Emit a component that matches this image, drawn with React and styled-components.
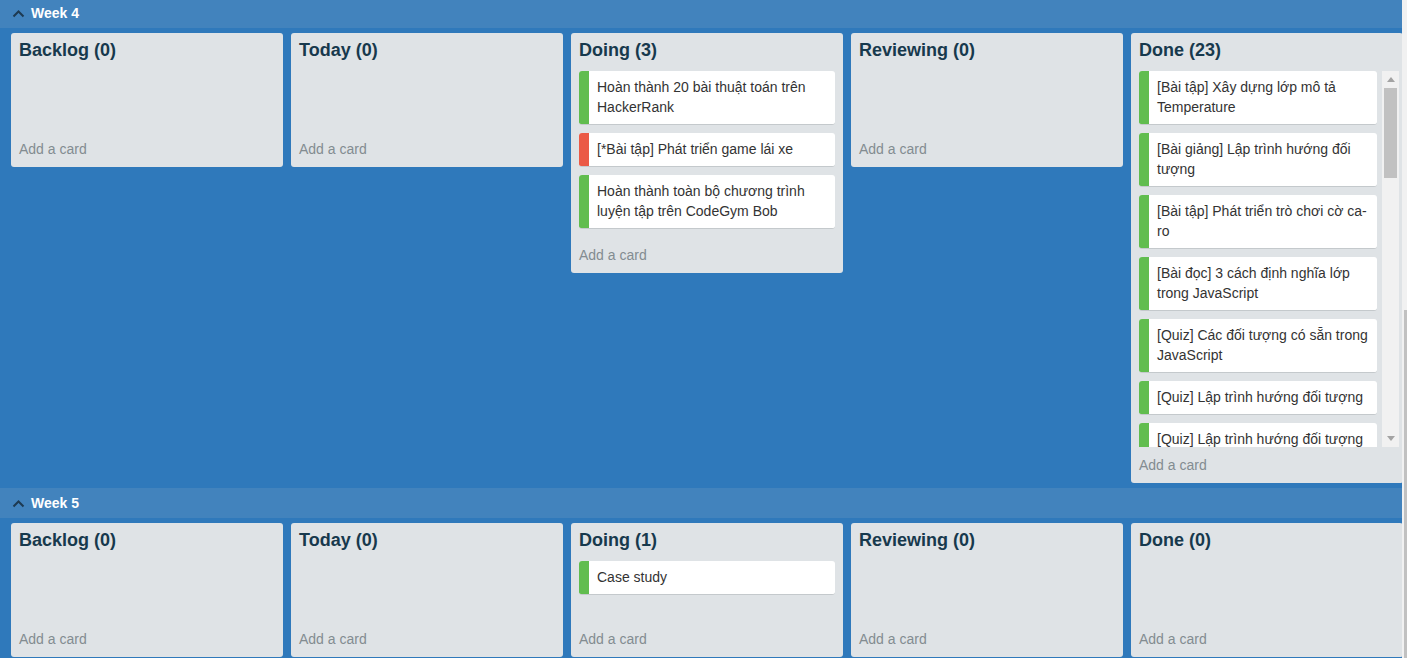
import React from "react";
import styled, { createGlobalStyle } from "styled-components";

const Global = createGlobalStyle`
  html, body { margin: 0; padding: 0; height: 100%; overflow: hidden; }
  body { font-family: "Liberation Sans", Arial, Helvetica, sans-serif; background: #2f79bb; }
  * { box-sizing: border-box; }
`;

const Page = styled.div`
  display: flex;
  width: 100vw;
  height: 100vh;
  overflow: hidden;
  background: #2f79bb;
`;

const Board = styled.div`
  flex: 1;
  min-width: 0;
  overflow: hidden;
  margin-top: -2px;
`;

const PageScroll = styled.div`
  width: 5px;
  flex: none;
  background: #f1f1f1;
  display: flex;
  flex-direction: column;
  align-items: flex-end;
`;

const PageThumb = styled.div`
  width: 3px;
  margin-top: 310px;
  flex: 1;
  background: #c1c1c1;
`;

const Section = styled.section`
  display: flex;
  flex-direction: column;
`;

const WeekHeader = styled.div`
  height: 30px;
  background: #4283bd;
  display: flex;
  align-items: center;
  padding-left: 12px;
  gap: 6px;
  color: #fff;
  font-weight: bold;
  font-size: 14px;
`;

const Lists = styled.div`
  display: flex;
  align-items: flex-start;
  gap: 8px;
  padding: 5px 0 5px 11px;
  overflow: hidden;
`;

const List = styled.div`
  flex: none;
  width: 272px;
  background: #dfe3e6;
  border-radius: 3px;
  display: flex;
  flex-direction: column;
`;

const ListTitle = styled.h2`
  margin: 0;
  padding: 6px 8px 10px;
  height: 38px;
  font-size: 18px;
  line-height: 22px;
  font-weight: bold;
  color: #17394d;
`;

const Cards = styled.div`
  min-height: 60px;
  padding: 0 8px 8px;
  display: flex;
  flex-direction: column;
  gap: 8px;
`;

const ScrollArea = styled.div`
  height: 376px;
  display: flex;
  padding-left: 8px;
  gap: 5px;
`;

const ScrollCards = styled.div`
  width: 238px;
  overflow: hidden;
  display: flex;
  flex-direction: column;
  gap: 8px;
`;

const InnerScrollbar = styled.div`
  width: 17px;
  background: #f1f1f1;
  display: flex;
  flex-direction: column;
  align-items: center;
`;

const ArrowBtn = styled.div`
  height: 17px;
  width: 17px;
  flex: none;
  display: flex;
  align-items: center;
  justify-content: center;
`;

const Thumb = styled.div`
  width: 13px;
  height: 90px;
  background: #c1c1c1;
`;

const Spacer = styled.div`
  flex: 1;
`;

const Card = styled.div`
  flex: none;
  display: flex;
  background: #fff;
  border-radius: 3px;
  border-bottom: 1px solid #c4c9cc;
  overflow: hidden;
`;

const Stripe = styled.div`
  width: 10px;
  flex: none;
  background: ${(p) => (p.$color === "red" ? "#eb5a46" : "#61bd4f")};
`;

const CardText = styled.div`
  padding: 6px 8px 7px;
  font-size: 14px;
  line-height: 20px;
  color: #333;
  min-width: 0;
`;

const AddCard = styled.div`
  padding: 8px;
  height: 36px;
  font-size: 14px;
  line-height: 20px;
  color: #838c91;
`;

const Chevron = () => (
  <svg width="13" height="9" viewBox="0 0 13 9">
    <path d="M1.5 7.5 L6.5 2.5 L11.5 7.5" fill="none" stroke="#1d3a52" strokeWidth="2" />
  </svg>
);

const Tri = ({ up }) => (
  <svg width="8" height="5" viewBox="0 0 8 5">
    <path d={up ? "M0 5 L4 0 L8 5 Z" : "M0 0 L4 5 L8 0 Z"} fill="#a3a3a3" />
  </svg>
);

const CardItem = ({ text, color }) => (
  <Card>
    <Stripe $color={color} />
    <CardText>{text}</CardText>
  </Card>
);

const doneCards = [
  "[Bài tập] Xây dựng lớp mô tả Temperature",
  "[Bài giảng] Lập trình hướng đối tượng",
  "[Bài tập] Phát triển trò chơi cờ ca-ro",
  "[Bài đọc] 3 cách định nghĩa lớp trong JavaScript",
  "[Quiz] Các đối tượng có sẵn trong JavaScript",
  "[Quiz] Lập trình hướng đối tượng",
  "[Quiz] Lập trình hướng đối tượng",
  "[Bài tập] Mô tả lớp Rectangle",
  "[Bài tập] Xây dựng lớp Circle",
];

const week4 = [
  { title: "Backlog (0)", cards: [] },
  { title: "Today (0)", cards: [] },
  {
    title: "Doing (3)",
    cards: [
      { text: "Hoàn thành 20 bài thuật toán trên HackerRank" },
      { text: "[*Bài tập] Phát triển game lái xe", color: "red" },
      { text: "Hoàn thành toàn bộ chương trình luyện tập trên CodeGym Bob" },
    ],
  },
  { title: "Reviewing (0)", cards: [] },
  { title: "Done (23)", scroll: true, cards: doneCards.map((t) => ({ text: t })) },
];

const week5 = [
  { title: "Backlog (0)", cards: [] },
  { title: "Today (0)", cards: [] },
  { title: "Doing (1)", cards: [{ text: "Case study" }] },
  { title: "Reviewing (0)", cards: [] },
  { title: "Done (0)", cards: [] },
];

const ListView = ({ list }) => (
  <List>
    <ListTitle>{list.title}</ListTitle>
    {list.scroll ? (
      <ScrollArea>
        <ScrollCards>
          {list.cards.map((c, i) => (
            <CardItem key={i} {...c} />
          ))}
        </ScrollCards>
        <InnerScrollbar>
          <ArrowBtn>
            <Tri up />
          </ArrowBtn>
          <Thumb />
          <Spacer />
          <ArrowBtn>
            <Tri />
          </ArrowBtn>
        </InnerScrollbar>
      </ScrollArea>
    ) : (
      <Cards>
        {list.cards.map((c, i) => (
          <CardItem key={i} {...c} />
        ))}
      </Cards>
    )}
    <AddCard>Add a card</AddCard>
  </List>
);

const Week = ({ name, lists }) => (
  <Section>
    <WeekHeader>
      <Chevron />
      <span>{name}</span>
    </WeekHeader>
    <Lists>
      {lists.map((l, i) => (
        <ListView key={i} list={l} />
      ))}
    </Lists>
  </Section>
);

export default function App() {
  return (
    <>
      <Global />
      <Page>
        <Board>
          <Week name="Week 4" lists={week4} />
          <Week name="Week 5" lists={week5} />
        </Board>
        <PageScroll>
          <PageThumb />
        </PageScroll>
      </Page>
    </>
  );
}
